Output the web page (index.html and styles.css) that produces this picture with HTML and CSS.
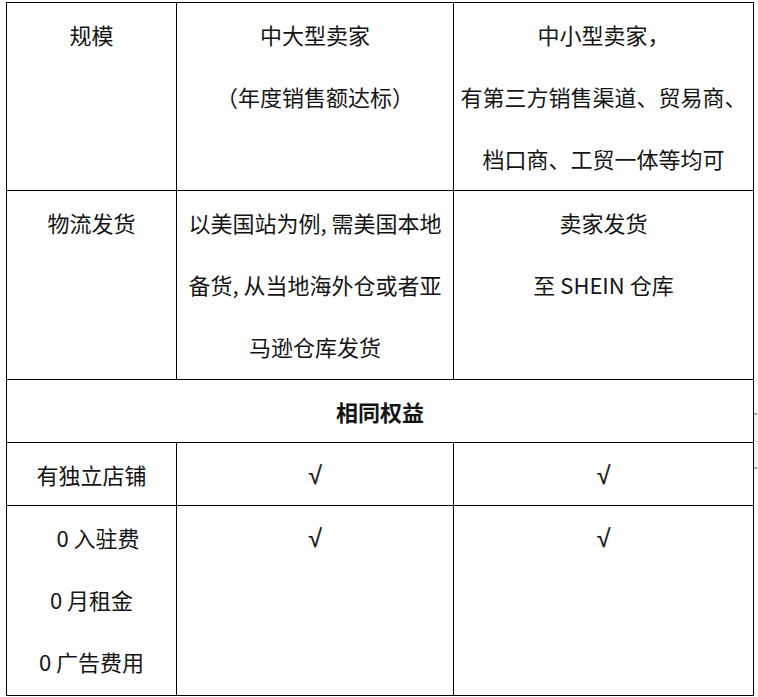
FILE: index.html
```html
<!DOCTYPE html>
<html lang="zh-CN">
<head>
<meta charset="utf-8">
<link rel="stylesheet" href="styles.css">
</head>
<body>
<table class="cmp">
  <colgroup>
    <col class="c1"><col class="c2"><col class="c3">
  </colgroup>
  <tr class="r1">
    <td><div class="ln">规模</div></td>
    <td><div class="ln">中大型卖家</div><div class="ln">（年度销售额达标）</div></td>
    <td><div class="ln">中小型卖家，</div><div class="ln">有第三方销售渠道、贸易商、</div><div class="ln">档口商、工贸一体等均可</div></td>
  </tr>
  <tr class="r2">
    <td><div class="ln">物流发货</div></td>
    <td><div class="ln">以美国站为例, 需美国本地</div><div class="ln">备货, 从当地海外仓或者亚</div><div class="ln">马逊仓库发货</div></td>
    <td><div class="ln">卖家发货</div><div class="ln">至 SHEIN 仓库</div></td>
  </tr>
  <tr>
    <td colspan="3" class="sec"><div class="ln">相同权益</div></td>
  </tr>
  <tr>
    <td><div class="ln">有独立店铺</div></td>
    <td><div class="ln"><span class="chk">√</span></div></td>
    <td><div class="ln"><span class="chk">√</span></div></td>
  </tr>
  <tr class="r5">
    <td><div class="ln indent">0 入驻费</div><div class="ln">0 月租金</div><div class="ln">0 广告费用</div></td>
    <td><div class="ln"><span class="chk">√</span></div></td>
    <td><div class="ln"><span class="chk">√</span></div></td>
  </tr>
</table>
<div class="scroll-mark"><span class="tick top"></span><span class="tick bottom"></span></div>
</body>
</html>
```
FILE: styles.css
```css
html, body {
  margin: 0;
  padding: 0;
  background: #fff;
}
body {
  position: relative;
  width: 758px;
  height: 697px;
  overflow: hidden;
  font-family: "Noto Sans CJK SC", "Open Sans", sans-serif;
  color: #141414;
}
.cmp {
  margin: 2px 0 0 6px;
  width: 747px;
  border-collapse: collapse;
  table-layout: fixed;
}
.c1 { width: 170px; }
.c2 { width: 277px; }
.c3 { width: 300px; }
.cmp td {
  border: 1px solid #000;
  padding: 0;
  vertical-align: top;
  text-align: center;
  font-size: 22px;
  white-space: nowrap;
}
.ln {
  height: 62px;
  line-height: 62px;
}
.indent { padding-left: 13px; }
.r1 td { height: 187px; }
.r2 td { height: 188px; }
.r5 td { height: 189px; }
.sec { font-weight: 700; }
.chk {
  font-family: "Liberation Sans", "DejaVu Sans", sans-serif;
  font-size: 25px;
  -webkit-text-stroke: 0.3px #141414;
}
.scroll-mark {
  position: absolute;
  left: 754px;
  top: 412px;
  width: 4px;
  height: 58px;
  background: #f3f3f3;
}
.tick {
  position: absolute;
  left: 0;
  width: 3px;
  height: 2px;
  background: #a8a8a8;
}
.tick.top { top: 1px; }
.tick.bottom { bottom: 1px; }
```
